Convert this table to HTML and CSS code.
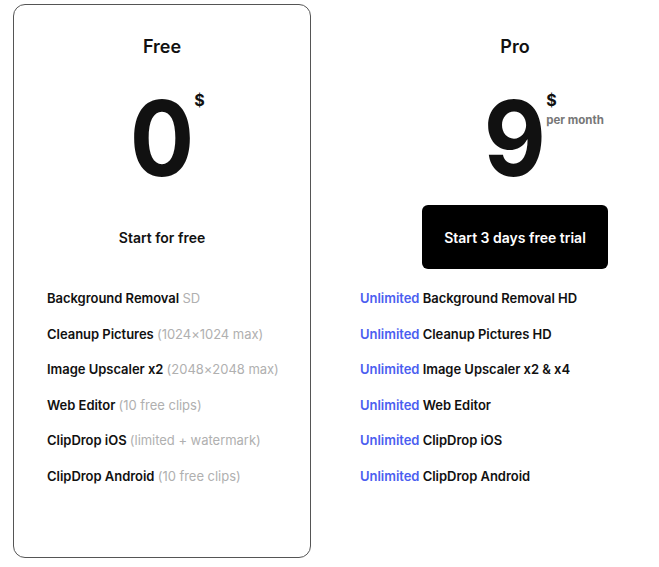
FILE: index.html
```html
<!DOCTYPE html>
<html lang="en">
<head>
  <meta charset="UTF-8" />
  <meta name="viewport" content="width=device-width, initial-scale=1.0"/>
  <title>Pricing</title>
  <link rel="stylesheet" href="styles.css">
</head>
<body>
  <main class="plans">
    <section class="plan plan-free">
      <h2>Free</h2>
      <div class="price">
        <span class="amount">0<span class="unit">$</span></span>
      </div>
      <button class="cta">Start for free</button>
      <ul class="features">
        <li>Background Removal <span class="note">SD</span></li>
        <li>Cleanup Pictures <span class="note">(1024×1024 max)</span></li>
        <li>Image Upscaler x2 <span class="note">(2048×2048 max)</span></li>
        <li>Web Editor <span class="note">(10 free clips)</span></li>
        <li>ClipDrop iOS <span class="note">(limited + watermark)</span></li>
        <li>ClipDrop Android <span class="note">(10 free clips)</span></li>
      </ul>
    </section>

    <section class="plan plan-pro">
      <h2>Pro</h2>
      <div class="price">
        <span class="amount">9<span class="unit">$<small>per month</small></span></span>
      </div>
      <button class="cta cta-dark">Start 3 days free trial</button>
      <ul class="features">
        <li><span class="hl">Unlimited</span> Background Removal HD</li>
        <li><span class="hl">Unlimited</span> Cleanup Pictures HD</li>
        <li><span class="hl">Unlimited</span> Image Upscaler x2 &amp; x4</li>
        <li><span class="hl">Unlimited</span> Web Editor</li>
        <li><span class="hl">Unlimited</span> ClipDrop iOS</li>
        <li><span class="hl">Unlimited</span> ClipDrop Android</li>
      </ul>
    </section>
  </main>
</body>
</html>
```

FILE: styles.css
```css
body {
  font-family: Inter, "Noto Sans", sans-serif;
  margin: 0;
  background: #fff;
  color: #111;
}

.plans {
  display: flex;
  gap: 16px;
  padding: 4px 0 0 13px;
}

.plan {
  flex: none;
  box-sizing: border-box;
  width: 298px;
  height: 554px;
  padding: 30px 33px 0;
  border: 1px solid transparent;
  border-radius: 12px;
  display: flex;
  flex-direction: column;
  align-items: center;
}

.plan-free {
  border-color: #555;
}

/* pro column runs to the window edge; its header is centred further right */
.plan-pro {
  flex: 1;
  padding-left: 78px;
  padding-right: 34px;
}

.plan-pro .features {
  margin-left: -46px;
}

.plan h2 {
  margin: 0;
  font-size: 18px;
  line-height: 24px;
  font-weight: 600;
}

.price {
  margin-top: 27px;
  height: 104px;
}

.amount {
  position: relative;
  display: inline-block;
  font-size: 104px;
  line-height: 104px;
  font-weight: 700;
  transform: scaleX(0.92);
}

.unit {
  position: absolute;
  left: 100%;
  top: 6px;
  font-size: 16px;
  line-height: 16px;
  white-space: nowrap;
  transform: scaleX(1.087);
  transform-origin: left top;
}

.unit small {
  display: block;
  margin-top: 5px;
  font-size: 11.5px;
  line-height: 14px;
  font-weight: 700;
  color: #777;
}

.cta {
  margin-top: 15px;
  width: 186px;
  height: 64px;
  border: none;
  border-radius: 6px;
  background: transparent;
  font-family: inherit;
  font-size: 14px;
  font-weight: 600;
  color: #111;
}

.cta-dark {
  background: #000;
  color: #fff;
}

.features {
  align-self: stretch;
  list-style: none;
  margin: 19px 0 0;
  padding: 0;
  display: flex;
  flex-direction: column;
  gap: 15.5px;
}

.features li {
  font-size: 13px;
  line-height: 20px;
  font-weight: 600;
  letter-spacing: -0.03px;
  white-space: nowrap;
}

.note {
  font-weight: 400;
  color: #b0b0b0;
}

.hl {
  color: #4b5ef0;
}
```
